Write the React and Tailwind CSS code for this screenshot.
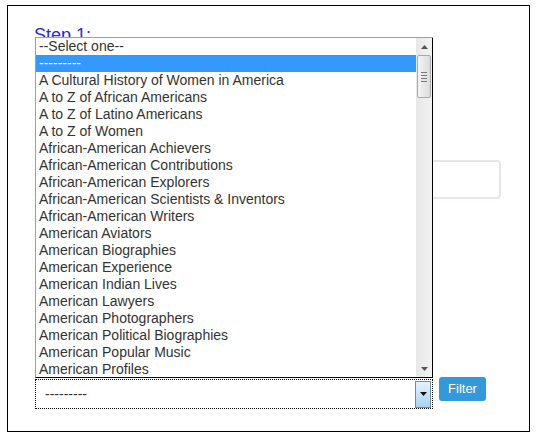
const options = [
  "--Select one--",
  "---------",
  "A Cultural History of Women in America",
  "A to Z of African Americans",
  "A to Z of Latino Americans",
  "A to Z of Women",
  "African-American Achievers",
  "African-American Contributions",
  "African-American Explorers",
  "African-American Scientists & Inventors",
  "African-American Writers",
  "American Aviators",
  "American Biographies",
  "American Experience",
  "American Indian Lives",
  "American Lawyers",
  "American Photographers",
  "American Political Biographies",
  "American Popular Music",
  "American Profiles",
];

function Arrow({ up, dark }) {
  return (
    <svg width="7" height="4" viewBox="0 0 7 4">
      <path
        d={up ? "M0 4 L3.5 0 L7 4 Z" : "M0 0 L7 0 L3.5 4 Z"}
        fill={dark ? "#111" : "#555"}
      />
    </svg>
  );
}

function Scrollbar() {
  return (
    <div className="flex flex-col w-[16px] h-full bg-gradient-to-r from-[#e8e8e8] to-[#f2f2f2] border-r border-black box-content">
      {/* up arrow */}
      <div className="h-[17px] flex items-center justify-center">
        <Arrow up />
      </div>
      {/* thumb */}
      <div className="mx-[1px] h-[43px] rounded-[2px] border border-[#a9a9a9] bg-gradient-to-r from-[#f4f4f4] to-[#dcdcdc] flex flex-col items-center justify-center gap-[2px]">
        <div className="w-[6px] h-px bg-[#777]" />
        <div className="w-[6px] h-px bg-[#777]" />
        <div className="w-[6px] h-px bg-[#777]" />
        <div className="w-[6px] h-px bg-[#777]" />
      </div>
      <div className="flex-1" />
      <div className="h-[17px] flex items-center justify-center">
        <Arrow />
      </div>
    </div>
  );
}

export default function App() {
  return (
    <div className="w-[537px] h-[436px] bg-white pt-[5px] pl-[7px] font-['Liberation_Sans',Arial,sans-serif]">
      <div className="relative w-[523px] h-[427px] border border-black pl-[26px] pt-[18px]">
        {/* STEP 1 */}
        <h2 className="text-[18px] leading-[22px] text-[#1f2bdc]">Step 1:</h2>

        {/* hidden text field behind the popup */}
        <div className="mt-[114px] ml-[1px] w-[466px] h-[39px] rounded-[4px] border-2 border-[#e4e8ee]" />

        {/* SELECT + FILTER */}
        <div className="mt-[178px] ml-[1px] flex items-start gap-[6px]">
          <div className="mt-[2px] w-[398px] h-[30px] border border-dotted border-black flex items-center bg-white">
            <span className="flex-1 pl-[9px] text-[14px] text-[#333]">---------</span>
            <div className="w-[16px] h-[27px] mr-px border border-[#6b8fb0] bg-gradient-to-b from-[#e6f2fc] to-[#a9d3f2] flex items-center justify-center">
              <Arrow dark />
            </div>
          </div>
          <button className="w-[47px] h-[24px] rounded-[3px] bg-[#3399dd] text-white text-[13px] leading-[24px] text-center">
            Filter
          </button>
        </div>

        {/* OPEN DROPDOWN LIST */}
        <div className="absolute left-[27px] top-[31px] w-[398px] h-[341px] flex bg-white border-l border-t border-[#a0a0a0] border-b-black border-b">
          <div className="flex-1 overflow-hidden">
            {options.map((opt, i) => (
              <div
                key={opt}
                className={
                  i === 1
                    ? "h-[17px] leading-[17px] pl-[3px] text-[14px] bg-[#3399ff] text-white whitespace-nowrap"
                    : "h-[17px] leading-[17px] pl-[3px] text-[14px] text-[#333] whitespace-nowrap"
                }
              >
                {opt}
              </div>
            ))}
          </div>
          <Scrollbar />
        </div>
      </div>
    </div>
  );
}
